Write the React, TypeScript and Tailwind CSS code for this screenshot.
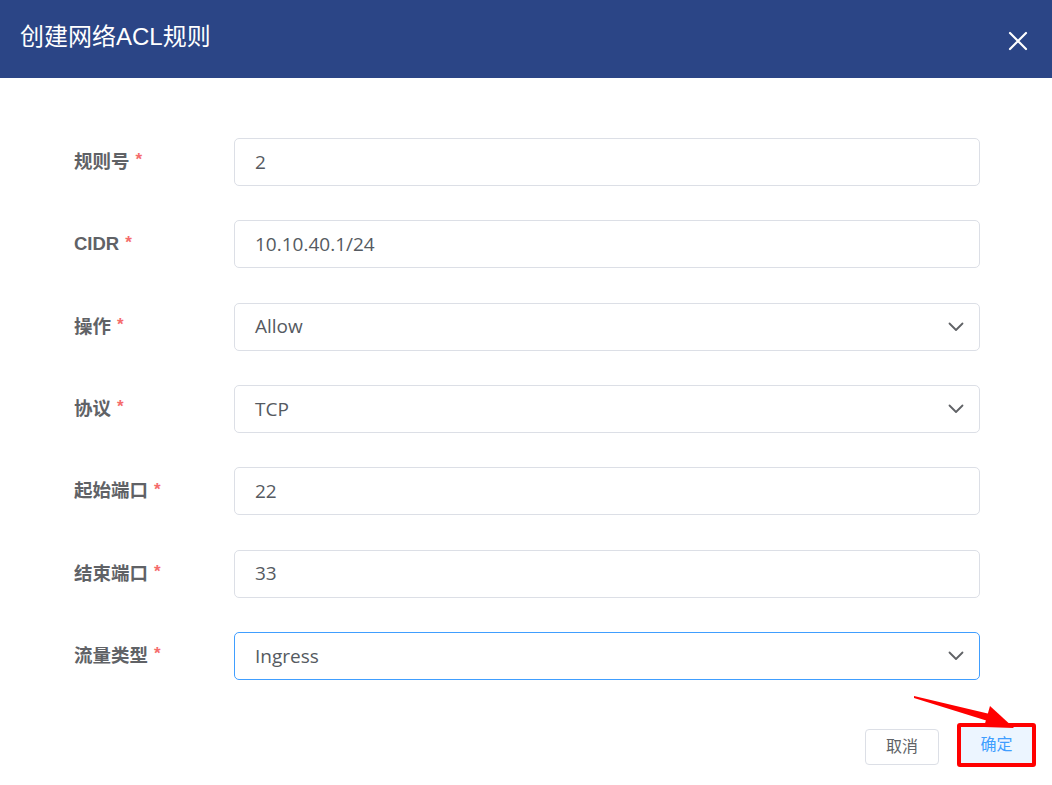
import React from "react";

const rows: { label: string; value: string; select?: boolean; focus?: boolean }[] = [
  { label: "规则号", value: "2" },
  { label: "CIDR", value: "10.10.40.1/24" },
  { label: "操作", value: "Allow", select: true },
  { label: "协议", value: "TCP", select: true },
  { label: "起始端口", value: "22" },
  { label: "结束端口", value: "33" },
  { label: "流量类型", value: "Ingress", select: true, focus: true },
];

function Chevron() {
  return (
    <svg width="16" height="10" viewBox="0 0 16 10" fill="none">
      <path d="M1.5 1.5 L8 8 L14.5 1.5" stroke="#606266" strokeWidth="1.8" strokeLinecap="round" strokeLinejoin="round" />
    </svg>
  );
}

export default function App() {
  return (
    <div
      className="relative w-[1052px] h-[785px] bg-white overflow-hidden flex flex-col"
      style={{ fontFamily: '"Liberation Sans", "Noto Sans CJK SC", sans-serif' }}
    >
      <div className="h-[78px] shrink-0 bg-[#2b4586] flex items-center justify-between pl-[20px] pr-[24px]">
        <div className="text-white text-[24px] leading-none pb-[4px]">创建网络ACL规则</div>
        <svg width="20" height="20" viewBox="0 0 20 20" className="mt-[4px]">
          <path d="M2 2 L18 18 M18 2 L2 18" stroke="white" strokeWidth="2.2" strokeLinecap="round" />
        </svg>
      </div>

      <div className="flex flex-col gap-[34.33px] pt-[60px] pl-[74px] pr-[72px]">
        {rows.map((r) => (
          <div key={r.label} className="flex items-center h-[48px]">
            <div className="w-[160px] shrink-0 flex items-center text-[18.5px] font-bold text-[#606266]">
              <span>{r.label}</span>
              <span className="text-[#f56c6c] ml-[6px] text-[17px] relative top-[-2px]">*</span>
            </div>
            <div
              className={`flex-1 h-[48px] rounded-[5px] border flex items-center justify-between pl-[20px] pr-[15px] ${
                r.focus ? "border-[#409eff]" : "border-[#dcdfe6]"
              }`}
            >
              <span
                className="text-[19px] text-[#555a61]"
                style={{ fontFamily: '"Open Sans", "Liberation Sans", sans-serif' }}
              >
                {r.value}
              </span>
              {r.select && <Chevron />}
            </div>
          </div>
        ))}
      </div>

      <div className="flex-1" />
      <div className="flex items-center justify-end pr-[16px] pb-[18px] gap-[18px]">
        <div className="w-[74px] h-[36px] rounded-[4px] border border-[#dcdfe6] flex items-center justify-center text-[16px] text-[#606266] mt-[4px]">
          取消
        </div>
        <div className="w-[79px] h-[44px] rounded-[3px] border-4 border-[#ff0000] bg-[#ecf5ff] flex items-center justify-center text-[16px] text-[#409eff]">
          确定
        </div>
      </div>

      <svg className="absolute left-0 top-0 pointer-events-none" width="1052" height="785">
        <polygon points="914,696 994,715 991,722 914,698" fill="#ff0000" />
        <polygon points="1014,728 990,706 984,727" fill="#ff0000" />
      </svg>
    </div>
  );
}
